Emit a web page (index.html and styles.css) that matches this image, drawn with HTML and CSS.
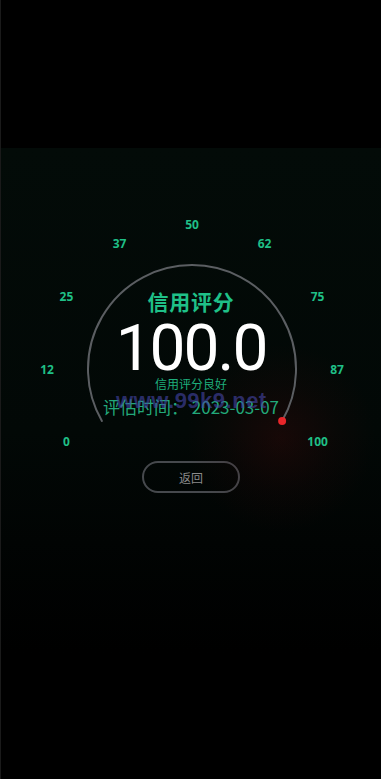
FILE: index.html
```html
<!DOCTYPE html>
<html lang="zh">
<head>
<meta charset="utf-8">
<title>信用评分</title>
<link rel="stylesheet" href="styles.css">
</head>
<body>
<div class="topbar"></div>
<main class="screen">
  <div class="glow"></div>
  <section class="gauge">
    <svg class="dial" viewBox="0 148 381 340" width="381" height="340" aria-hidden="true">
      <path d="M 100.9 421 A 104 104 0 1 1 281.1 421" fill="none" stroke="#5b5e62" stroke-width="2" stroke-linecap="round"/>
      <circle cx="281.1" cy="421" r="4" fill="#e8262a"/>
      <g class="ticks">
        <text x="65.4" y="441.5">0</text>
        <text x="46" y="369">12</text>
        <text x="65.4" y="296.5">25</text>
        <text x="118.5" y="243.4">37</text>
        <text x="191" y="224">50</text>
        <text x="263.5" y="243.4">62</text>
        <text x="316.6" y="296.5">75</text>
        <text x="336" y="369">87</text>
        <text x="316.6" y="441.5">100</text>
      </g>
    </svg>
    <div class="readout">
      <h1 class="title">信用评分</h1>
      <div class="score">100.0</div>
      <div class="level">信用评分良好</div>
      <div class="date">评估时间： 2023-03-07</div>
      <div class="watermark">www.99k9.net</div>
    </div>
  </section>
  <div class="actions">
    <button class="back" type="button">返回</button>
  </div>
</main>
</body>
</html>
```
FILE: styles.css
```css
html, body {
  margin: 0;
  padding: 0;
  background: #000;
}
body {
  width: 381px;
  height: 779px;
  overflow: hidden;
  font-family: "Noto Sans CJK SC", "Noto Sans", sans-serif;
  border-left: 1px solid #1a1a1a;
  box-sizing: border-box;
}
.topbar {
  height: 148px;
  background: #000;
}
.screen {
  position: relative;
  height: 631px;
  background: linear-gradient(180deg, #030b08 0%, #020806 45%, #000000 80%, #000 100%);
  overflow: hidden;
}
.glow {
  position: absolute;
  left: 185px;
  top: 195px;
  width: 190px;
  height: 190px;
  border-radius: 50%;
  background: radial-gradient(circle, rgba(90, 10, 12, 0.24) 0%, rgba(60, 8, 10, 0.12) 40%, rgba(0, 0, 0, 0) 70%);
}
.gauge {
  position: relative;
  height: 313px;
}
.dial {
  position: absolute;
  left: 0;
  top: 0;
  display: block;
}
.ticks text {
  font-family: "Open Sans", "Noto Sans", sans-serif;
  font-weight: 700;
  font-size: 12px;
  fill: #1fbf86;
  text-anchor: middle;
  dominant-baseline: central;
}
.readout {
  position: relative;
  padding-top: 140px;
  display: flex;
  flex-direction: column;
  align-items: center;
}
.title {
  margin: 0;
  font-size: 21px;
  line-height: 27px;
  font-weight: 700;
  color: #1fc088;
  letter-spacing: 0.8px;
}
.score {
  margin-top: 2px;
  font-family: Roboto, "Noto Sans", sans-serif;
  font-weight: 400;
  font-size: 64px;
  line-height: 64px;
  color: #fff;
  letter-spacing: -2px;
}
.level {
  margin-top: -5px;
  font-size: 12px;
  line-height: 16px;
  color: #1eae7c;
}
.date {
  margin-top: 5px;
  font-size: 17px;
  line-height: 20px;
  color: #22a87a;
  white-space: pre;
}
.watermark {
  position: absolute;
  left: 115px;
  top: 241px;
  font-family: "Liberation Sans", sans-serif;
  font-weight: 700;
  font-size: 22px;
  line-height: 24px;
  color: rgba(70, 70, 170, 0.6);
  letter-spacing: 0.5px;
}
.actions {
  display: flex;
  justify-content: center;
}
.back {
  width: 98px;
  height: 32px;
  border: 2px solid #46494d;
  border-radius: 16px;
  background: transparent;
  color: #8b8b8b;
  font-family: "Noto Sans CJK SC", sans-serif;
  font-size: 12px;
  padding: 0;
}
```
